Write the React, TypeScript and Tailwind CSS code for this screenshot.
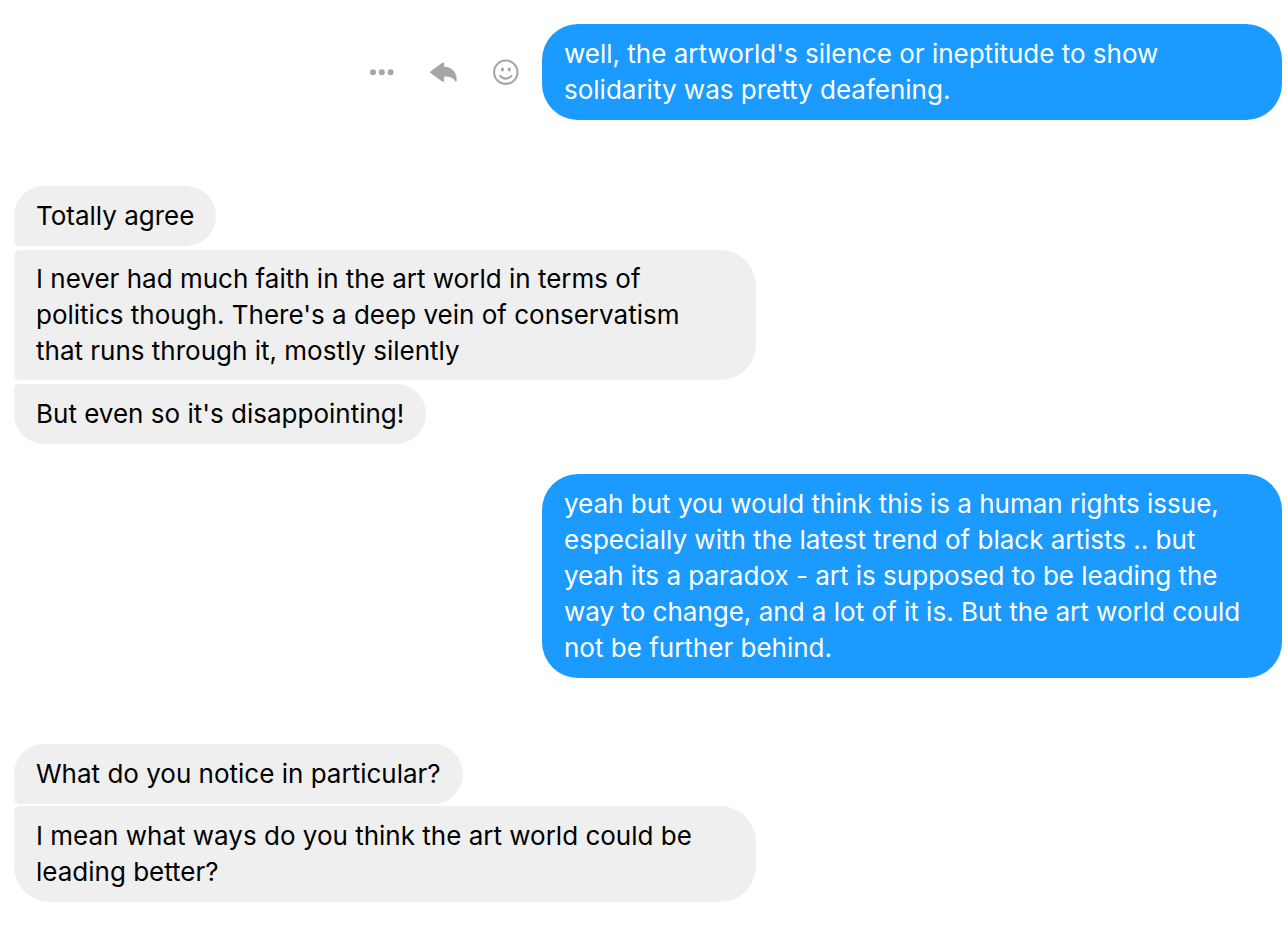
import { ReactNode } from "react";
import clsx from "clsx";

type TMessage = {
  text: string;
  className?: string;
};

type TGroup = {
  sent: boolean;
  actions?: boolean;
  className: string;
  messages: TMessage[];
};

const groups: TGroup[] = [
  {
    sent: true,
    actions: true,
    className: "mb-[66px]",
    messages: [
      {
        text: "well, the artworld's silence or ineptitude to show solidarity was pretty deafening.",
      },
    ],
  },
  {
    sent: false,
    className: "mb-[30px] gap-1",
    messages: [
      { text: "Totally agree" },
      {
        text: "I never had much faith in the art world in terms of politics though. There's a deep vein of conservatism that\u00a0runs through it, mostly silently",
        className: "py-[11px]",
      },
      { text: "But even so it's disappointing!" },
    ],
  },
  {
    sent: true,
    className: "mb-[66px]",
    messages: [
      {
        text: "yeah but you would think this is a human rights issue, especially with the latest trend of black artists .. but yeah its a paradox - art is supposed to be leading the way to change, and a lot of it is. But the art world could not be further behind.",
      },
    ],
  },
  {
    sent: false,
    className: "gap-0.5",
    messages: [
      { text: "What do you notice in particular?" },
      {
        text: "I mean what ways do you think the art world could be leading better?",
      },
    ],
  },
];

const IconButton = ({ label, children }: { label: string; children: ReactNode }) => (
  <button type="button" aria-label={label} className="cursor-pointer">
    {children}
  </button>
);

const Actions = () => (
  <div className="flex shrink-0 items-center gap-9 text-[#a6a6a6]">
    <IconButton label="More">
      <svg width="24" height="28" viewBox="0 0 24 28" fill="currentColor">
        <circle cx="3" cy="14.2" r="3" />
        <circle cx="11.8" cy="14.2" r="3" />
        <circle cx="20.6" cy="14.2" r="3" />
      </svg>
    </IconButton>
    <IconButton label="Reply">
      <svg width="27" height="28" viewBox="0 0 27 28" fill="currentColor">
        <path d="M0.5 13.4 11.8 5.1Q14.2 3.6 14.2 6V8.8C22 9.2 27 14.4 26.7 22.4Q26.4 24.8 24.9 22.8C22.6 19.4 19 18.6 14.2 18.6V22.2Q14.2 24.8 11.8 23.2L0.5 15Q-0.4 14.2 0.5 13.4Z" />
      </svg>
    </IconButton>
    <IconButton label="React">
      <svg width="26" height="28" viewBox="0 0 26 28" fill="none" stroke="currentColor" strokeWidth="2.1" strokeLinecap="round">
        <circle cx="12.8" cy="14.2" r="11.7" />
        <path d="M7.2 17.8Q9.4 20.6 12.8 20.6T18.4 17.8" />
        <ellipse cx="9.4" cy="11.5" rx="1.6" ry="2.1" fill="currentColor" stroke="none" />
        <ellipse cx="16.2" cy="11.5" rx="1.6" ry="2.1" fill="currentColor" stroke="none" />
      </svg>
    </IconButton>
  </div>
);

const Bubble = ({ text, className, sent }: TMessage & { sent: boolean }) => (
  <p
    className={clsx(
      "px-[22px]",
      className || "py-3",
      sent
        ? "max-w-[740px] rounded-[36px] bg-[#1b9bff] text-white"
        : "max-w-[742px] rounded-r-[36px] rounded-l-md bg-[#efefef] text-black group-first/row:rounded-tl-[36px] group-last/row:rounded-bl-[36px]"
    )}
  >
    {text}
  </p>
);

export default function App() {
  return (
    <main className="flex min-h-screen flex-col bg-white pt-6 pr-1.5 pb-6 pl-3.5 font-['Inter',sans-serif] text-[26px] leading-9">
      {groups.map((group, i) => (
        <section key={i} className={clsx("flex flex-col", group.className)}>
          {group.messages.map((message) => (
            <div
              key={message.text}
              className={clsx(
                "group/row flex items-center gap-[23px]",
                group.sent && "justify-end"
              )}
            >
              {group.actions && <Actions />}
              <Bubble {...message} sent={group.sent} />
            </div>
          ))}
        </section>
      ))}
    </main>
  );
}
